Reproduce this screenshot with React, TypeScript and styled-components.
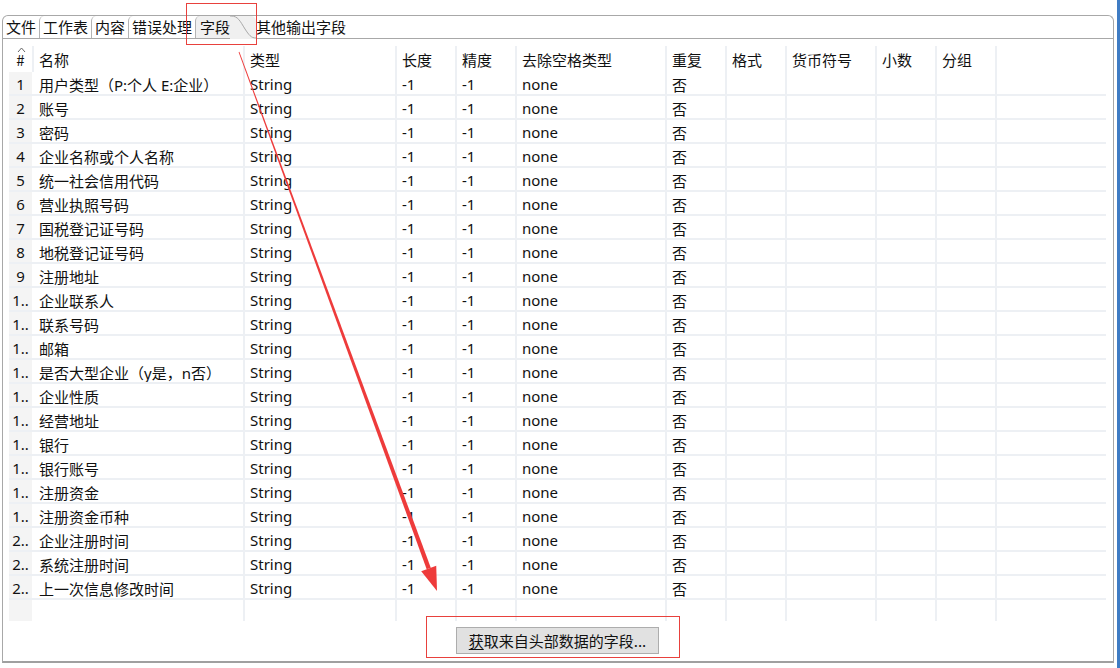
import React from "react";
import styled, { createGlobalStyle } from "styled-components";

const GlobalStyle = createGlobalStyle`
  html, body { margin: 0; padding: 0; background: #ffffff; }
  body { font-family: "Noto Sans", "Noto Sans CJK SC", sans-serif; }
`;

const COLS = "25px 211px 152px 60px 60px 150px 60px 60px 90px 60px 60px 1fr";

const Page = styled.div`
  position: relative;
  width: 1120px;
  height: 668px;
  overflow: hidden;
  background: #ffffff;
  display: flex;
  box-sizing: border-box;
  padding: 15px 0 0 2px;
  font-family: "Noto Sans", "Noto Sans CJK SC", sans-serif;
  font-size: 15px;
  color: #1a1a1a;
`;

const WindowEdge = styled.div`
  position: absolute;
  top: 0;
  right: 0;
  width: 3px;
  height: 100%;
  background: #3f7cc4;
`;

const Frame = styled.div`
  width: 1112px;
  height: 648px;
  box-sizing: border-box;
  border: 1px solid #a8a8a8;
  border-bottom: 2px solid #a0a0a0;
  border-radius: 6px 6px 0 0;
  display: flex;
  flex-direction: column;
  background: #ffffff;
`;

const TabStrip = styled.div`
  height: 22px;
  display: flex;
  align-items: stretch;
  border-bottom: 1px solid #a8a8a8;
`;

const Tab = styled.div<{ $active?: boolean; $first?: boolean; $afterActive?: boolean }>`
  position: relative;
  display: flex;
  align-items: center;
  padding: ${(p) => (p.$active ? "0 26px 0 4px" : p.$afterActive ? "0 3px 0 0" : "0 3px 0 3px")};
  border-left: ${(p) => (p.$first || p.$afterActive ? "none" : "1px solid #b4b4b4")};
  border-radius: 5px 5px 0 0;
  background: ${(p) => (p.$active ? "#f0f0f0" : "transparent")};
  font-family: "Noto Sans CJK SC", sans-serif;
  font-size: 15px;
  line-height: 22px;
  color: #111;
`;

const TabCurve = styled.svg`
  position: absolute;
  top: -1px;
  right: 0;
  width: 26px;
  height: 24px;
`;

const Body = styled.div`
  flex: 1;
  display: flex;
  flex-direction: column;
  padding: 7px 7px 0 6px;
`;

const Table = styled.div`
  display: flex;
  flex-direction: column;
`;

const HeaderRow = styled.div`
  display: grid;
  grid-template-columns: ${COLS};
  height: 26px;
`;

const HeaderCell = styled.div<{ $center?: boolean; $last?: boolean }>`
  position: relative;
  display: flex;
  align-items: center;
  justify-content: ${(p) => (p.$center ? "center" : "flex-start")};
  padding-left: ${(p) => (p.$center ? "0" : "5px")};
  border-right: ${(p) => (p.$last ? "none" : "2px solid #edf0f4")};
  font-family: "Noto Sans CJK SC", sans-serif;
  font-size: 15px;
  color: #111;
`;

const SortMark = styled.svg`
  position: absolute;
  top: 1px;
  left: 8px;
  width: 9px;
  height: 6px;
`;

const Row = styled.div<{ $empty?: boolean }>`
  display: grid;
  grid-template-columns: ${COLS};
  height: ${(p) => (p.$empty ? "21px" : "24px")};
  box-sizing: border-box;
  border-bottom: ${(p) => (p.$empty ? "none" : "2px solid #edf0f4")};
`;

const NumCell = styled.div`
  display: flex;
  align-items: center;
  justify-content: center;
  background: #f4f4f4;
  border-right: 2px solid #ffffff;
  font-size: 15px;
  color: #111;
  padding-top: 2px;
`;

const Cell = styled.div<{ $last?: boolean }>`
  display: flex;
  align-items: center;
  padding-left: 5px;
  padding-top: 2px;
  border-right: ${(p) => (p.$last ? "none" : "2px solid #edf0f4")};
  white-space: nowrap;
  overflow: hidden;
  font-family: "Noto Sans", "Noto Sans CJK SC", sans-serif;
  font-size: 15px;
  color: #111;
`;

const Footer = styled.div`
  display: flex;
  justify-content: center;
  padding-top: 6px;
`;

const Button = styled.button`
  width: 203px;
  height: 27px;
  background: #e1e1e1;
  border: 1px solid #adadad;
  border-radius: 0;
  font-family: "Noto Sans CJK SC", sans-serif;
  font-size: 15px;
  color: #111;
  padding: 0;
  display: flex;
  align-items: center;
  justify-content: center;
  u { text-decoration: underline; text-underline-offset: 2px; }
`;

const Overlay = styled.svg`
  position: absolute;
  top: 0;
  left: 0;
  width: 1120px;
  height: 668px;
  pointer-events: none;
`;

const tabs = ["文件", "工作表", "内容", "错误处理", "字段", "其他输出字段"];
const ACTIVE = 4;
const headers = ["名称", "类型", "长度", "精度", "去除空格类型", "重复", "格式", "货币符号", "小数", "分组"];
const names = [
  "用户类型（P:个人 E:企业）",
  "账号",
  "密码",
  "企业名称或个人名称",
  "统一社会信用代码",
  "营业执照号码",
  "国税登记证号码",
  "地税登记证号码",
  "注册地址",
  "企业联系人",
  "联系号码",
  "邮箱",
  "是否大型企业（y是，n否）",
  "企业性质",
  "经营地址",
  "银行",
  "银行账号",
  "注册资金",
  "注册资金币种",
  "企业注册时间",
  "系统注册时间",
  "上一次信息修改时间",
];

function rowLabel(i: number) {
  const n = i + 1;
  return n < 10 ? String(n) : `${String(n)[0]}..`;
}

// arrow geometry
const sx = 239, sy = 52, tx = 437, ty = 591;
const dx = tx - sx, dy = ty - sy;
const len = Math.sqrt(dx * dx + dy * dy);
const ux = dx / len, uy = dy / len;
const px = uy, py = -ux;
const headLen = 24, headHalf = 8;
const bx = tx - ux * headLen, by = ty - uy * headLen;
const w0 = 0.4, w1 = 2.2;
const shaft = [
  [sx + px * w0, sy + py * w0],
  [bx + px * w1, by + py * w1],
  [bx - px * w1, by - py * w1],
  [sx - px * w0, sy - py * w0],
].map((p) => p.join(",")).join(" ");
const head = [
  [tx, ty],
  [bx + px * headHalf, by + py * headHalf],
  [bx - px * headHalf, by - py * headHalf],
].map((p) => p.join(",")).join(" ");

const EmptyCells = () => (
  <>
    <Cell />
    <Cell />
    <Cell />
    <Cell />
    <Cell $last />
  </>
);

export default function App() {
  return (
    <Page>
      <GlobalStyle />
      <Frame>
        <TabStrip>
          {tabs.map((t, i) => (
            <Tab key={t} $first={i === 0} $active={i === ACTIVE} $afterActive={i === ACTIVE + 1}>
              {t}
              {i === ACTIVE && (
                <TabCurve viewBox="0 0 26 24">
                  <path d="M0 1 L1 1 C8 1 10 6 15 14 C19 20 21 23 26 23 L26 24 L0 24 Z" fill="#f0f0f0" />
                  <path d="M0 1 L1 1 C8 1 10 6 15 14 C19 20 21 23 26 23" fill="none" stroke="#a8a8a8" strokeWidth="1" />
                </TabCurve>
              )}
            </Tab>
          ))}
        </TabStrip>
        <Body>
          <Table>
            <HeaderRow>
              <HeaderCell $center>
                <SortMark viewBox="0 0 9 6">
                  <polyline points="1,5 4.5,1 8,5" fill="none" stroke="#666" strokeWidth="1" />
                </SortMark>
                #
              </HeaderCell>
              {headers.map((h) => (
                <HeaderCell key={h}>{h}</HeaderCell>
              ))}
              <HeaderCell $last />
            </HeaderRow>
            {names.map((n, i) => (
              <Row key={n}>
                <NumCell>{rowLabel(i)}</NumCell>
                <Cell>{n}</Cell>
                <Cell>String</Cell>
                <Cell>-1</Cell>
                <Cell>-1</Cell>
                <Cell>none</Cell>
                <Cell>否</Cell>
                <EmptyCells />
              </Row>
            ))}
            <Row $empty>
              <NumCell />
              <Cell />
              <Cell />
              <Cell />
              <Cell />
              <Cell />
              <Cell />
              <EmptyCells />
            </Row>
          </Table>
          <Footer>
            <Button>
              <u>获</u>取来自头部数据的字段...
            </Button>
          </Footer>
        </Body>
      </Frame>
      <WindowEdge />
      <Overlay viewBox="0 0 1120 668">
        <rect x="186.5" y="3.5" width="70" height="41" fill="none" stroke="#e8413d" strokeWidth="1" />
        <rect x="426.5" y="616.5" width="253" height="41" fill="none" stroke="#e8413d" strokeWidth="1" />
        <polygon points={shaft} fill="#ee3b3b" />
        <polygon points={head} fill="#ee3b3b" />
      </Overlay>
    </Page>
  );
}
